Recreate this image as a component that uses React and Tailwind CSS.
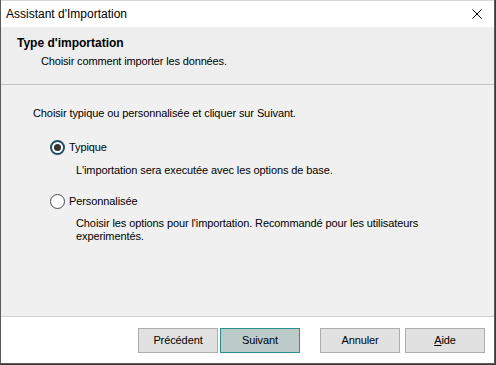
import React from 'react';

const font = { fontFamily: '"Liberation Sans", Arial, sans-serif' };

function Radio({ checked }) {
  return (
    <span
      className={`flex items-center justify-center w-[15px] h-[15px] rounded-full bg-white ${
        checked ? 'border-2 border-[#1f4e5f]' : 'border-[1.5px] border-[#4a4a4a]'
      }`}
    >
      {checked && <span className="w-[7px] h-[7px] rounded-full bg-[#333333]" />}
    </span>
  );
}

function Btn({ children, primary }) {
  return (
    <button
      className={`w-[80px] h-[25px] text-[11px] tracking-[-0.1px] text-black border flex items-center justify-center ${
        primary ? 'bg-[#bccbc8] border-[#2a8f8f]' : 'bg-[#e1e1e1] border-[#adadad]'
      }`}
    >
      {children}
    </button>
  );
}

export default function App() {
  return (
    <div className="w-[496px] h-[365px] bg-[#3a3a3a] text-[11px] tracking-[-0.1px] text-black" style={font}>
      <div className="w-[495px] h-[364px] flex flex-col border-l border-r border-b border-[#5b5b5b] bg-white">
        {/* Title bar */}
        <div className="h-[27px] flex items-center justify-between pl-[5px] pr-[10px] bg-white border-t border-[#d8d8d8]">
          <span className="text-[12px] tracking-normal text-black">Assistant d'Importation</span>
          <svg width="10" height="10" viewBox="0 0 10 10" className="mr-[2px]">
            <path d="M0.5 0.5 L9.5 9.5 M9.5 0.5 L0.5 9.5" stroke="#000" strokeWidth="1" />
          </svg>
        </div>

        {/* Header */}
        <div className="h-[58px] bg-[#eeeeee] border-b border-[#c4c4c4] pl-[16px] pt-[7px] flex flex-col">
          <span className="font-bold text-[12px] tracking-normal leading-[18px]">Type d'importation</span>
          <span className="pl-[24px] leading-[18px] tracking-[-0.15px]">Choisir comment importer les données.</span>
        </div>

        {/* Body */}
        <div className="flex-1 bg-[#f0f0f0] border-b border-[#d0d0d0] pl-[32px] pt-[20px] flex flex-col">
          <span className="leading-[16px]">Choisir typique ou personnalisée et cliquer sur Suivant.</span>

          <div className="mt-[18px] pl-[17px] flex items-center gap-[4px] h-[16px]">
            <Radio checked />
            <span>Typique</span>
          </div>
          <span className="mt-[7px] pl-[43px] leading-[16px]">
            L'importation sera executée avec les options de base.
          </span>

          <div className="mt-[15px] pl-[17px] flex items-center gap-[4px] h-[16px]">
            <Radio />
            <span>Personnalisée</span>
          </div>
          <span className="mt-[8px] pl-[43px] pr-[60px] leading-[13px]">
            Choisir les options pour l'importation. Recommandé pour les utilisateurs experimentés.
          </span>
        </div>

        {/* Footer */}
        <div className="h-[46px] bg-white flex items-start pt-[11px] pl-[137px]">
          <Btn>Précédent</Btn>
          <div className="ml-[2px]">
            <Btn primary>Suivant</Btn>
          </div>
          <div className="ml-[20px]">
            <Btn>Annuler</Btn>
          </div>
          <div className="ml-[5px]">
            <Btn>
              <span className="underline">A</span>ide
            </Btn>
          </div>
        </div>
      </div>
    </div>
  );
}
